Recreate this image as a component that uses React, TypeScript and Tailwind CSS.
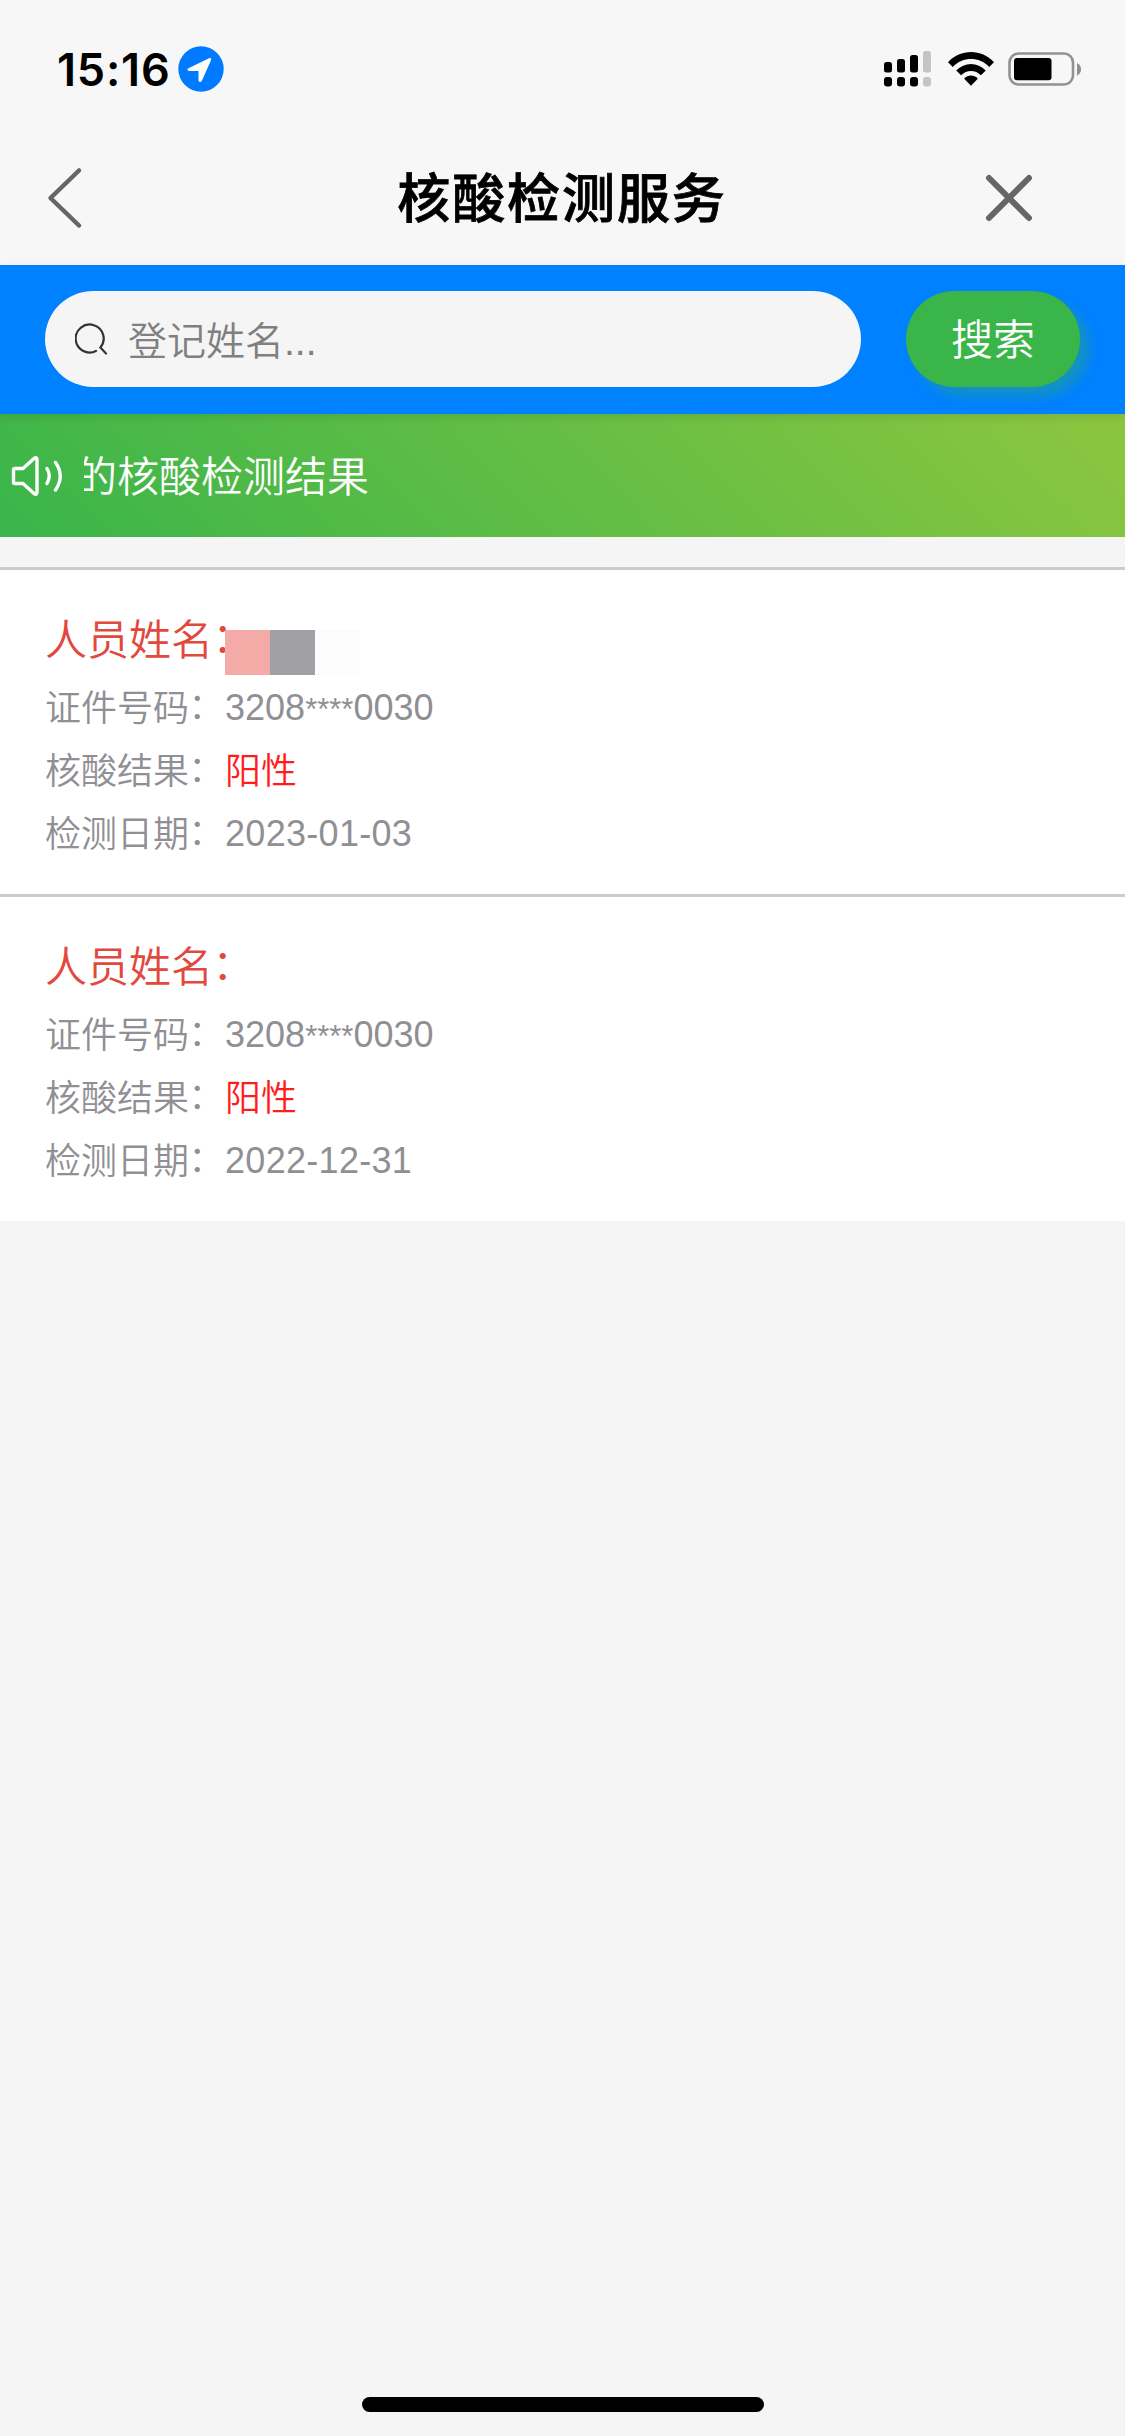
import React from 'react';

type RecordType = {
  id: string;
  idNumber: string;
  result: string;
  date: string;
  mask: string[];
};

const records: RecordType[] = [
  {
    id: '1',
    idNumber: '3208****0030',
    result: '阳性',
    date: '2023-01-03',
    mask: ['bg-[#f4aaa7]', 'bg-[#a1a0a5]', 'bg-[#fcfcfc]'],
  },
  {
    id: '2',
    idNumber: '3208****0030',
    result: '阳性',
    date: '2022-12-31',
    mask: [],
  },
];

function StatusBar() {
  return (
    <div className="flex h-[138px] items-center justify-between pl-[57px] pr-[43px]">
      <div className="flex items-center">
        <span className="w-[121px] whitespace-nowrap font-['Inter'] text-[45px] font-semibold leading-none tracking-[0.8px] text-black">
          15:16
        </span>
        <svg className="h-[46px] w-[46px]" viewBox="0 0 46 46">
          <circle cx="23" cy="23" r="22.7" fill="#007aff" />
          <path
            d="M10 22.500 L31 12.200 Q33.700 11.200 33 14.200 L24 34.500 Q22 37.600 20.500 34.800 V25 H11 Q8.500 24 10 22.500Z"
            fill="#fff"
          />
        </svg>
      </div>
      <div className="flex items-center">
        <svg className="h-[36px] w-[48px]" viewBox="0 0 48 36">
          <g fill="#000">
            <rect x="0" y="11" width="8" height="10.500" rx="2.500" />
            <rect x="13" y="8" width="8" height="13.500" rx="2.500" />
            <rect x="26" y="4" width="8" height="17.500" rx="2.500" />
            <rect x="0" y="26" width="8" height="9.500" rx="3" />
            <rect x="13" y="26" width="8" height="9.500" rx="3" />
            <rect x="26" y="26" width="8" height="9.500" rx="3" />
          </g>
          <g fill="#c4c4c4">
            <rect x="39" y="0" width="8" height="21.500" rx="2.500" />
            <rect x="39" y="26" width="8" height="9.500" rx="3" />
          </g>
        </svg>
        <svg className="ml-4 h-[34px] w-[46px]" viewBox="0 0 46 34">
          <path d="M0 10.300 C12.500 -3.400 33.500 -3.400 46 10.300 L41.200 15 C31.500 4.400 14.500 4.400 4.800 15 Z" fill="#000" />
          <path d="M8.200 18.600 C16.500 9.700 29.500 9.700 37.800 18.600 L32.900 23.300 C27.500 17.600 18.500 17.600 13.100 23.300 Z" fill="#000" />
          <path d="M16.200 26.700 C20 22.400 26 22.400 29.800 26.700 L23 33.700 Z" fill="#000" />
        </svg>
        <svg className="ml-[14px] h-[34px] w-[74px]" viewBox="0 0 74 34">
          <rect x="1.500" y="1.500" width="63.500" height="31" rx="9" fill="none" stroke="#929292" strokeWidth="2.600" />
          <rect x="6" y="6" width="37.500" height="22.300" rx="3" fill="#000" />
          <path d="M69 11 Q73 13 73 17.300 Q73 21.500 69 23.800 Z" fill="#8f8f8f" />
        </svg>
      </div>
    </div>
  );
}

function NavBar() {
  return (
    <div className="flex h-[119px] items-center justify-between pl-[47px] pr-[92px]">
      <svg className="h-[62px] w-[47px]" viewBox="0 0 47 62" fill="none" stroke="#666" strokeWidth="4.500" strokeLinecap="round" strokeLinejoin="round">
        <path d="M32 3.500 L3.500 31 L32 58.500" />
      </svg>
      <h1 className="ml-[45px] whitespace-nowrap pt-[3px] text-[53px] font-medium leading-none tracking-[1.9px] text-black [-webkit-text-stroke:0.8px_black]">
        核酸检测服务
      </h1>
      <svg className="h-[48px] w-[48px]" viewBox="0 0 48 48" stroke="#666" strokeWidth="6" strokeLinecap="round">
        <path d="M4 4 L44 44 M44 4 L4 44" />
      </svg>
    </div>
  );
}

function SearchBar() {
  return (
    <div className="relative z-10 flex h-[149px] items-center justify-between bg-[#0081ff] px-[45px] pb-px shadow-[0_3px_9px_rgba(0,0,0,0.1)]">
      <div className="flex h-[96px] w-[816px] items-center rounded-full bg-[#f5f5f5] pl-[30px]">
        <svg className="h-[33px] w-[33px]" viewBox="0 0 33 33" fill="none" stroke="#333" strokeWidth="2.200" strokeLinecap="round">
          <path d="M21 28 A14 14 0 1 1 25.400 24.500 L31 30.500" />
        </svg>
        <span className="ml-5 whitespace-nowrap pt-[4px] text-[39px] font-[350] leading-none text-[#808080]">登记姓名...</span>
      </div>
      <button className="h-[96px] w-[174px] rounded-full bg-[#39b54a] pt-[3px] text-[42px] font-[350] leading-none text-white shadow-[9px_9px_12px_rgba(57,181,74,0.35)]">
        搜索
      </button>
    </div>
  );
}

function NoticeBar() {
  return (
    <div className="flex h-[123px] items-center bg-[linear-gradient(45deg,#39b54a,#8dc63f)] pl-[11px] text-white">
      <svg className="h-[40px] w-[51px]" viewBox="0 0 51 40" fill="none" stroke="#fff" strokeWidth="3.400" strokeLinecap="round" strokeLinejoin="round">
        <path d="M2.500 14 Q2.500 12.500 4 12.500 H12 L23 2.500 Q26 0.500 26 4 V36 Q26 39.500 23 37.500 L12 27.500 H4 Q2.500 27.500 2.500 26 Z" />
        <path d="M36 12.500 Q40.500 20 36 27.500 M44.500 6.500 Q54 20 44.500 34" />
      </svg>
      <div className="ml-[22px] overflow-hidden pt-[4px]">
        <p className="-ml-[9px] whitespace-nowrap text-[42px] font-[350] leading-[60px]">的核酸检测结果</p>
      </div>
    </div>
  );
}

function Label({ children }: { children: React.ReactNode }) {
  return (
    <span className="font-[350]">
      {children}
      <span className="relative -left-[0.02em] -top-[0.05em]">：</span>
    </span>
  );
}

// the asterisks sit a little smaller than the digits around them
function IdNumber({ value }: { value: string }) {
  const [head, tail] = value.split('****');
  return (
    <span className="-mt-px">
      {head}
      <span className="text-[31px]">****</span>
      {tail}
    </span>
  );
}

function RecordCard({ record }: { record: RecordType }) {
  return (
    <li className="h-[327px] border-t-[3px] border-[#cccccc] bg-white px-[45px] pt-[34px] text-[36px] leading-[63px] text-[#8f8f94]">
      <div className="relative text-[42px] leading-[73px] text-[#e2483d]">
        <Label>人员姓名</Label>
        <div className="absolute left-[180px] top-[26px] flex">
          {record.mask.map((color, i) => (
            <span key={i} className={`h-[45px] w-[45px] ${color}`} />
          ))}
        </div>
      </div>
      <div className="flex h-[63px]">
        <Label>证件号码</Label>
        <IdNumber value={record.idNumber} />
      </div>
      <div className="flex h-[63px]">
        <Label>核酸结果</Label>
        <span className="font-[350] text-[#ff1c1c]">{record.result}</span>
      </div>
      <div className="flex h-[63px]">
        <Label>检测日期</Label>
        <span className="-mt-px tracking-[0.3px]">{record.date}</span>
      </div>
    </li>
  );
}

export default function App() {
  return (
    <main
      lang="zh-CN"
      className="flex h-[2436px] w-[1125px] flex-col overflow-hidden bg-[#f5f5f5] font-['Liberation_Sans','Noto_Sans_CJK_SC',sans-serif]"
    >
      <header className="h-[265px] bg-[#f7f7f7]">
        <StatusBar />
        <NavBar />
      </header>
      <SearchBar />
      <NoticeBar />
      <ul className="mt-[30px]">
        {records.map((record) => (
          <RecordCard key={record.id} record={record} />
        ))}
      </ul>
      <div className="mx-auto mb-[24px] mt-auto h-[15px] w-[402px] rounded-full bg-black" />
    </main>
  );
}
